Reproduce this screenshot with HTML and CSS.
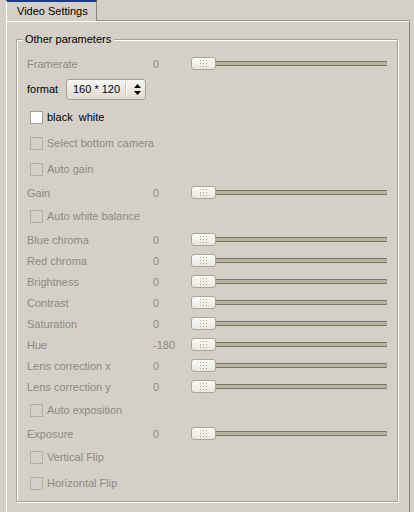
FILE: index.html
```html
<!DOCTYPE html>
<html>
<head>
<meta charset="utf-8">
<link rel="stylesheet" href="styles.css">
</head>
<body>
<div class="tabbar">
  <div class="tab">Video Settings</div>
</div>
<div class="panel">
  <div class="group">
    <span class="legend">Other parameters</span>

    <div class="row srow dis"><span class="lbl">Framerate</span><span class="val">0</span><div class="slider"><div class="track"></div><div class="thumb"><svg width="7" height="7" viewBox="0 0 7 7"><g fill="#a9a596"><rect x="0" y="0" width="1" height="1"/><rect x="3" y="0" width="1" height="1"/><rect x="6" y="0" width="1" height="1"/><rect x="0" y="3" width="1" height="1"/><rect x="3" y="3" width="1" height="1"/><rect x="6" y="3" width="1" height="1"/><rect x="0" y="6" width="1" height="1"/><rect x="3" y="6" width="1" height="1"/><rect x="6" y="6" width="1" height="1"/></g></svg></div></div></div>

    <div class="row frow"><span class="flbl">format</span>
      <div class="combo"><span class="ctext">160 * 120</span><span class="csep"></span><svg class="carrows" width="7" height="11" viewBox="0 0 7 11"><path d="M3.5 0 L7 4 L0 4 Z M0 7 L7 7 L3.5 11 Z" fill="#000"/></svg></div>
    </div>

    <div class="row crow"><span class="cb on"></span><span class="clbl">black&nbsp; white</span></div>
    <div class="row crow dis"><span class="cb"></span><span class="clbl">Select bottom camera</span></div>
    <div class="row crow dis"><span class="cb"></span><span class="clbl">Auto gain</span></div>

    <div class="row srow dis"><span class="lbl">Gain</span><span class="val">0</span><div class="slider"><div class="track"></div><div class="thumb"><svg width="7" height="7" viewBox="0 0 7 7"><g fill="#a9a596"><rect x="0" y="0" width="1" height="1"/><rect x="3" y="0" width="1" height="1"/><rect x="6" y="0" width="1" height="1"/><rect x="0" y="3" width="1" height="1"/><rect x="3" y="3" width="1" height="1"/><rect x="6" y="3" width="1" height="1"/><rect x="0" y="6" width="1" height="1"/><rect x="3" y="6" width="1" height="1"/><rect x="6" y="6" width="1" height="1"/></g></svg></div></div></div>

    <div class="row crow dis"><span class="cb"></span><span class="clbl">Auto white balance</span></div>

    <div class="row srow dis"><span class="lbl">Blue chroma</span><span class="val">0</span><div class="slider"><div class="track"></div><div class="thumb"><svg width="7" height="7" viewBox="0 0 7 7"><g fill="#a9a596"><rect x="0" y="0" width="1" height="1"/><rect x="3" y="0" width="1" height="1"/><rect x="6" y="0" width="1" height="1"/><rect x="0" y="3" width="1" height="1"/><rect x="3" y="3" width="1" height="1"/><rect x="6" y="3" width="1" height="1"/><rect x="0" y="6" width="1" height="1"/><rect x="3" y="6" width="1" height="1"/><rect x="6" y="6" width="1" height="1"/></g></svg></div></div></div>
    <div class="row srow dis"><span class="lbl">Red chroma</span><span class="val">0</span><div class="slider"><div class="track"></div><div class="thumb"><svg width="7" height="7" viewBox="0 0 7 7"><g fill="#a9a596"><rect x="0" y="0" width="1" height="1"/><rect x="3" y="0" width="1" height="1"/><rect x="6" y="0" width="1" height="1"/><rect x="0" y="3" width="1" height="1"/><rect x="3" y="3" width="1" height="1"/><rect x="6" y="3" width="1" height="1"/><rect x="0" y="6" width="1" height="1"/><rect x="3" y="6" width="1" height="1"/><rect x="6" y="6" width="1" height="1"/></g></svg></div></div></div>
    <div class="row srow dis"><span class="lbl">Brightness</span><span class="val">0</span><div class="slider"><div class="track"></div><div class="thumb"><svg width="7" height="7" viewBox="0 0 7 7"><g fill="#a9a596"><rect x="0" y="0" width="1" height="1"/><rect x="3" y="0" width="1" height="1"/><rect x="6" y="0" width="1" height="1"/><rect x="0" y="3" width="1" height="1"/><rect x="3" y="3" width="1" height="1"/><rect x="6" y="3" width="1" height="1"/><rect x="0" y="6" width="1" height="1"/><rect x="3" y="6" width="1" height="1"/><rect x="6" y="6" width="1" height="1"/></g></svg></div></div></div>
    <div class="row srow dis"><span class="lbl">Contrast</span><span class="val">0</span><div class="slider"><div class="track"></div><div class="thumb"><svg width="7" height="7" viewBox="0 0 7 7"><g fill="#a9a596"><rect x="0" y="0" width="1" height="1"/><rect x="3" y="0" width="1" height="1"/><rect x="6" y="0" width="1" height="1"/><rect x="0" y="3" width="1" height="1"/><rect x="3" y="3" width="1" height="1"/><rect x="6" y="3" width="1" height="1"/><rect x="0" y="6" width="1" height="1"/><rect x="3" y="6" width="1" height="1"/><rect x="6" y="6" width="1" height="1"/></g></svg></div></div></div>
    <div class="row srow dis"><span class="lbl">Saturation</span><span class="val">0</span><div class="slider"><div class="track"></div><div class="thumb"><svg width="7" height="7" viewBox="0 0 7 7"><g fill="#a9a596"><rect x="0" y="0" width="1" height="1"/><rect x="3" y="0" width="1" height="1"/><rect x="6" y="0" width="1" height="1"/><rect x="0" y="3" width="1" height="1"/><rect x="3" y="3" width="1" height="1"/><rect x="6" y="3" width="1" height="1"/><rect x="0" y="6" width="1" height="1"/><rect x="3" y="6" width="1" height="1"/><rect x="6" y="6" width="1" height="1"/></g></svg></div></div></div>
    <div class="row srow dis"><span class="lbl">Hue</span><span class="val">-180</span><div class="slider"><div class="track"></div><div class="thumb"><svg width="7" height="7" viewBox="0 0 7 7"><g fill="#a9a596"><rect x="0" y="0" width="1" height="1"/><rect x="3" y="0" width="1" height="1"/><rect x="6" y="0" width="1" height="1"/><rect x="0" y="3" width="1" height="1"/><rect x="3" y="3" width="1" height="1"/><rect x="6" y="3" width="1" height="1"/><rect x="0" y="6" width="1" height="1"/><rect x="3" y="6" width="1" height="1"/><rect x="6" y="6" width="1" height="1"/></g></svg></div></div></div>
    <div class="row srow dis"><span class="lbl">Lens correction x</span><span class="val">0</span><div class="slider"><div class="track"></div><div class="thumb"><svg width="7" height="7" viewBox="0 0 7 7"><g fill="#a9a596"><rect x="0" y="0" width="1" height="1"/><rect x="3" y="0" width="1" height="1"/><rect x="6" y="0" width="1" height="1"/><rect x="0" y="3" width="1" height="1"/><rect x="3" y="3" width="1" height="1"/><rect x="6" y="3" width="1" height="1"/><rect x="0" y="6" width="1" height="1"/><rect x="3" y="6" width="1" height="1"/><rect x="6" y="6" width="1" height="1"/></g></svg></div></div></div>
    <div class="row srow dis"><span class="lbl">Lens correction y</span><span class="val">0</span><div class="slider"><div class="track"></div><div class="thumb"><svg width="7" height="7" viewBox="0 0 7 7"><g fill="#a9a596"><rect x="0" y="0" width="1" height="1"/><rect x="3" y="0" width="1" height="1"/><rect x="6" y="0" width="1" height="1"/><rect x="0" y="3" width="1" height="1"/><rect x="3" y="3" width="1" height="1"/><rect x="6" y="3" width="1" height="1"/><rect x="0" y="6" width="1" height="1"/><rect x="3" y="6" width="1" height="1"/><rect x="6" y="6" width="1" height="1"/></g></svg></div></div></div>

    <div class="row crow dis"><span class="cb"></span><span class="clbl">Auto exposition</span></div>

    <div class="row srow dis"><span class="lbl">Exposure</span><span class="val">0</span><div class="slider"><div class="track"></div><div class="thumb"><svg width="7" height="7" viewBox="0 0 7 7"><g fill="#a9a596"><rect x="0" y="0" width="1" height="1"/><rect x="3" y="0" width="1" height="1"/><rect x="6" y="0" width="1" height="1"/><rect x="0" y="3" width="1" height="1"/><rect x="3" y="3" width="1" height="1"/><rect x="6" y="3" width="1" height="1"/><rect x="0" y="6" width="1" height="1"/><rect x="3" y="6" width="1" height="1"/><rect x="6" y="6" width="1" height="1"/></g></svg></div></div></div>

    <div class="row crow dis"><span class="cb"></span><span class="clbl">Vertical Flip</span></div>
    <div class="row crow dis"><span class="cb"></span><span class="clbl">Horizontal Flip</span></div>
  </div>
</div>
</body>
</html>
```

FILE: styles.css
```css
html, body {
  margin: 0;
  padding: 0;
  overflow: hidden;
  background: #d4d0c8;
}
body {
  font-family: "Liberation Sans", Arial, sans-serif;
  font-size: 11px;
  color: #000;
  width: 414px;
  height: 512px;
}
.tabbar {
  height: 20px;
  display: flex;
}
.tab {
  margin-left: 6px;
  width: 79px;
  height: 19px;
  border-top: 2px solid #1f3b78;
  border-left: 1px solid #fff;
  border-right: 1px solid #8a877f;
  padding-left: 10px;
  box-sizing: content-box;
  line-height: 19px;
  position: relative;
  z-index: 2;
  background: #d4d0c8;
  margin-bottom: -1px;
}
.panel {
  margin-left: 6px;
  width: 404px;
  border-left: 1px solid #fff;
  border-top: 1px solid #9a978f;
  border-right: 1px solid #8a877f;
  box-shadow: inset 0 1px 0 #fff;
  padding: 18px 10px 20px 9px;
  box-sizing: border-box;
}
.group {
  position: relative;
  border: 1px solid #a6a298;
  box-shadow: inset 1px 1px 0 #fff, 1px 1px 0 #fff;
  padding: 13px 0 5px 10px;
  width: 382px;
  box-sizing: border-box;
}
.legend {
  position: absolute;
  left: 6px;
  top: -8px;
  padding: 0 3px 0 2px;
  background: #d4d0c8;
  line-height: 14px;
  color: #000;
}
.row {
  display: flex;
  align-items: center;
}
.srow { height: 21px; }
.crow { height: 26px; }
.frow { height: 30px; }
.dis { color: #8d8a82; }
.lbl { width: 126px; }
.val { width: 38px; }
.slider {
  position: relative;
  width: 196px;
  height: 13px;
}
.track {
  margin-top: 4px;
  height: 5px;
  border: 1px solid #78745f;
  border-right-color: #a9a594;
  background: #b8b4a2;
  box-sizing: border-box;
}
.thumb {
  position: absolute;
  left: 0;
  top: 0;
  width: 25px;
  height: 13px;
  box-sizing: border-box;
  border: 1px solid #aaa696;
  border-radius: 3px;
  background: linear-gradient(#fbfbf8, #e9e7dd);
  display: flex;
  align-items: center;
  justify-content: center;
}
.thumb svg { display: block; }
.flbl { width: 39px; }
.combo {
  width: 80px;
  height: 21px;
  box-sizing: border-box;
  border: 1px solid #a5a192;
  border-radius: 3px;
  background: linear-gradient(#f7f6f1, #dedbd0);
  display: flex;
  align-items: center;
}
.ctext {
  margin-left: 6px;
  width: 53px;
  color: #000;
}
.csep {
  width: 1px;
  height: 15px;
  background: #fff;
  box-shadow: -1px 0 0 #c9c6bb;
}
.carrows {
  display: block;
  margin-left: 7px;
}
.cb {
  width: 13px;
  height: 13px;
  box-sizing: border-box;
  border: 1px solid #b2afa5;
  margin-left: 3px;
  margin-right: 4px;
}
.cb.on {
  background: #fff;
  border-color: #a29f95;
}
```
